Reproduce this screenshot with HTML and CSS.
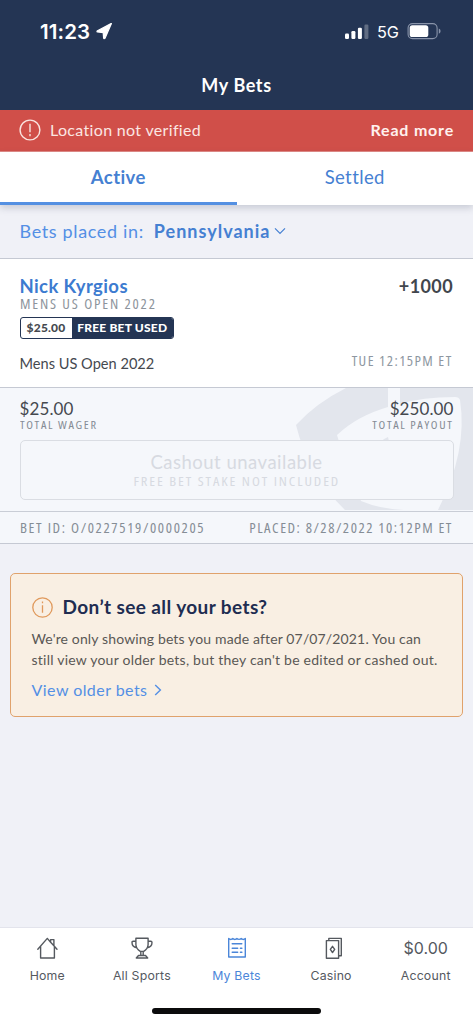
FILE: index.html
```
<!DOCTYPE html>
<html lang="en">
<head>
<meta charset="utf-8">
<title>My Bets</title>
<link rel="stylesheet" href="styles.css">
</head>
<body>
<div class="app">
  <header class="header">
    <div class="status">
      <div class="clock"><span class="time">11:23</span>
        <svg width="17" height="17" viewBox="0 0 17 17"><path d="M15.2 1 L8.9 15.4 Q8.1 16.2 7.6 15 L7.2 9.6 L1.5 9 Q.4 8.5 1.5 7.7 L14.6 .8 Q15.8 .2 15.2 1Z" fill="#fff" stroke="#fff" stroke-width="1.2" stroke-linejoin="round"/></svg>
      </div>
      <div class="signal">
        <svg width="24" height="16" viewBox="0 0 24 16"><g fill="#fff"><rect x="0" y="9.5" width="4" height="5.5" rx="1.2"/><rect x="6.4" y="7" width="4" height="8" rx="1.2"/><rect x="12.9" y="3.8" width="4" height="11.2" rx="1.2"/><rect x="19.4" y=".5" width="4" height="14.5" rx="1.2" opacity=".28"/></g></svg>
        <span class="network">5G</span>
        <svg width="34" height="17" viewBox="0 0 34 17"><rect x="1.1" y=".6" width="29" height="15" rx="4.4" fill="none" stroke="#8994aa" stroke-width="1.1"/><rect x="2.7" y="2.2" width="18.6" height="11.8" rx="2.6" fill="#fff"/><path d="M31.8 5.4 Q33.6 6.2 33.6 8.1 T31.8 10.8Z" fill="#8994aa"/></svg>
      </div>
    </div>
    <h1 class="title">My Bets</h1>
  </header>

  <div class="alert">
    <svg width="22" height="22" viewBox="0 0 22 22" fill="none" stroke="#fae3df" stroke-width="1.4"><circle cx="11" cy="11" r="9.9"/><path d="M11 4.8V13.3M11 15V17.2"/></svg>
    <span class="alert-text">Location not verified</span>
    <b class="alert-link">Read more</b>
  </div>

  <nav class="tabs">
    <div class="tab tab-active"><span>Active</span></div>
    <div class="tab"><span>Settled</span></div>
  </nav>

  <div class="filter">
    <span class="filter-label">Bets placed in:</span>
    <b class="filter-value">Pennsylvania</b>
    <svg width="12" height="8" viewBox="0 0 12 8" fill="none" stroke="#4580d2" stroke-width="1.2"><path d="M1 1.3L6 6.3L11 1.3"/></svg>
  </div>

  <section class="bet">
    <div class="pick">
      <div class="row"><b class="name">Nick Kyrgios</b><b class="odds">+1000</b></div>
      <div class="event"><span class="cond">MENS US OPEN 2022</span></div>
      <div class="badge"><span class="badge-amount">$25.00</span><span class="badge-label">FREE BET USED</span></div>
      <div class="row match"><span class="match-name">Mens US Open 2022</span><span class="cond cond-end match-time">TUE 12:15PM ET</span></div>
    </div>
    <div class="money">
      <svg class="watermark" width="180" height="122" viewBox="293 388 180 122"><path fill="#e3e6ed" fill-rule="evenodd" d="M346 388H388V407Q357 416 337 435Q348 473 361 501Q380 509 404 510H345Q308 474 296 425Q316 403 346 388ZM400 388H473V510H438Q468 451 460 400Q459 397 455 397Q422 397 400 404ZM376 446Q381 440 388 437L390 446Z"/></svg>
      <div class="row">
        <div class="amount"><span class="sum">$25.00</span><span class="cond small">TOTAL WAGER</span></div>
        <div class="amount right"><span class="sum">$250.00</span><span class="cond cond-end small">TOTAL PAYOUT</span></div>
      </div>
      <div class="cashout"><span class="cashout-title">Cashout unavailable</span><span class="cond cond-mid cashout-note">FREE BET STAKE NOT INCLUDED</span></div>
    </div>
    <div class="meta"><span class="cond bet-id">BET ID: O/0227519/0000205</span><span class="cond cond-end placed">PLACED: 8/28/2022 10:12PM ET</span></div>
  </section>

  <aside class="notice">
    <div class="notice-head">
      <svg width="21" height="21" viewBox="0 0 21 21" fill="none" stroke="#e0995c" stroke-width="1.3"><circle cx="10.5" cy="10.5" r="9.7"/><path d="M10.5 8.2V15.8M10.5 4.5V6.3"/></svg>
      <h2 class="notice-title">Don’t see all your bets?</h2>
    </div>
    <p class="notice-text"><span class="line1">We're only showing bets you made after 07/07/2021. You can</span><br><span class="line2">still view your older bets, but they can't be edited or cashed out.</span></p>
    <div class="notice-link"><span>View older bets</span><svg width="8" height="12" viewBox="0 0 8 12" fill="none" stroke="#548fe5" stroke-width="1.4"><path d="M1.2 1L6.4 6L1.2 11"/></svg></div>
  </aside>

  <footer class="nav">
    <div class="nav-items">
      <div class="item home"><svg width="22" height="22" viewBox="0 0 22 22"><path d="M1.8 12.2L11.3 1.4L14.6 5.2M21 12.2L17.9 8.8V2.6H14.6V5.2L17.9 8.8M4.6 9.6V21H18.4V9.6"/></svg><span>Home</span></div>
      <div class="item sports"><svg width="22" height="22" viewBox="0 0 22 22"><path d="M4.9 1.2H17.1V7.8Q16.8 12 12.7 14.4H9.3Q5.2 12 4.9 7.8ZM4.9 4.3H2.2Q1 4.3 1 5.5Q1 9.9 5.8 10.8M17.1 4.3H19.8Q21 4.3 21 5.5Q21 9.9 16.2 10.8M9.3 14.4H12.7M9.8 14.8V18.4M12.2 14.8V18.4M7.5 18.5H14.5L16.7 21H5.3Z"/></svg><span>All Sports</span></div>
      <div class="item bets on"><svg width="22" height="22" viewBox="0 0 22 22"><path d="M3.7 1.5Q5.7 3.3 7.8 1.5Q9.8 3.3 11.9 1.5Q14 3.3 16.2 1.5Q18.3 3.3 20.3 1.5V20H3.7ZM7.2 6.8H16.8M7.2 11.2H12.7M15.4 11.2H16.9M7.2 15.3H12.7M15.4 15.3H16.9"/></svg><span>My Bets</span></div>
      <div class="item casino"><svg width="24" height="22" viewBox="0 0 24 22"><path d="M7.4 3.6H19.6V21.2H7.4ZM9.8 3.6V1.4H22.3V18.8H19.6M13.5 9.3L15.7 12.4L13.5 15.5L11.3 12.4Z"/></svg><span>Casino</span></div>
      <div class="item account"><strong class="balance">$0.00</strong><span>Account</span></div>
    </div>
    <div class="home-bar"></div>
  </footer>
</div>
</body>
</html>
```
FILE: styles.css
```
* { box-sizing: border-box; }
body { margin: 0; font-family: "Lato", "Open Sans", sans-serif; color: #45494f; background: #f0f1f7; }
svg { display: block; flex: none; }
span, b { white-space: nowrap; }
.app { width: 473px; height: 1024px; display: flex; flex-direction: column; overflow: hidden; background: #f0f1f7; }
.row { display: flex; justify-content: space-between; }
.cond { display: inline-block; font-family: "Open Sans", "Noto Sans", sans-serif; font-stretch: 75%; transform: scaleX(1.09); transform-origin: left center; }
.cond-end { transform-origin: right center; }
.cond-mid { transform-origin: center; }

.header { height: 110px; background: #243554; color: #fff; }
.status { height: 63px; padding: 0 32px 0 40px; display: flex; justify-content: space-between; align-items: center; }
.clock { display: flex; align-items: center; gap: 6px; }
.time { font: 600 20.5px/24px "Inter", sans-serif; letter-spacing: .1px; }
.signal { display: flex; align-items: center; gap: 8px; }
.network { font: 400 16.3px/20px "Inter", sans-serif; }
.title { margin: 10px 0 0; text-align: center; font-size: 18px; line-height: 24px; font-weight: 700; letter-spacing: .6px; }

.alert { height: 42px; padding: 0 19px 1px 19px; display: flex; align-items: center; background: #d04f49; color: #fbe6e2; border-bottom: 1px solid #e08a86; }
.alert span, .alert b { padding-bottom: 2px; }
.alert-text { margin-left: 9px; font-size: 16px; letter-spacing: .33px; }
.alert-link { margin-left: auto; font-size: 16px; letter-spacing: .8px; color: #fff1ee; }

.tabs { height: 53px; display: flex; background: #fff; box-shadow: 0 3px 7px rgba(60, 70, 90, .22); position: relative; z-index: 1; }
.tab { flex: 1; height: 53px; padding-top: 13px; text-align: center; font-size: 18.5px; line-height: 24px; letter-spacing: .4px; color: #4580d2; }
.tab-active { font-weight: 700; border-bottom: 3px solid #5490e2; }

.filter { height: 54px; padding: 0 20px 1px 19.5px; display: flex; align-items: center; color: #4580d2; font-size: 18px; border-bottom: 1px solid #c5c9d3; }
.filter-label { color: #548fe5; letter-spacing: .65px; }
.filter-value { margin: 0 4px 0 10px; letter-spacing: 1px; }

.pick { height: 129px; padding: 15px 20px 0 19.5px; background: #fff; border-bottom: 1px solid #c5c9d3; }
.name { font-size: 18.5px; line-height: 24px; letter-spacing: .4px; color: #3c7bd0; }
.odds { font-size: 18px; line-height: 24px; letter-spacing: .4px; color: #41464d; }
.event { height: 14px; font-size: 13.5px; line-height: 13px; color: #8d949c; letter-spacing: 1.65px; }
.badge { width: 154.5px; height: 22px; margin-top: 5px; display: flex; border: 1px solid #243554; border-radius: 3px; overflow: hidden; font-size: 12px; font-weight: 900; line-height: 20px; }
.badge-amount { width: 51px; text-align: center; letter-spacing: .2px; }
.badge-label { flex: 1; text-align: center; letter-spacing: .2px; color: #fff; background: #243554; }
.match { margin-top: 14px; line-height: 21px; font-size: 14.6px; }
.match-time { font-size: 13.5px; line-height: 17px; color: #8e97a1; letter-spacing: 1.3px; }

.money { height: 124px; padding: 11px 19.5px 0; background: #f5f7fb; border-bottom: 1px solid #c9cdd6; position: relative; }
.watermark { position: absolute; right: 0; top: 0; }
.money .row, .cashout { position: relative; }
.amount { display: flex; flex-direction: column; align-items: flex-start; }
.right { align-items: flex-end; }
.sum { font-size: 17px; line-height: 19px; letter-spacing: .1px; }
.small { font-size: 11.3px; line-height: 13px; color: #858c95; letter-spacing: 1.5px; }
.cashout { height: 60px; margin-top: 9px; padding-top: 10px; display: flex; flex-direction: column; align-items: center; background: #f5f7fb; border: 1.6px solid #dadde3; border-radius: 5px; color: #d7dae1; }
.cashout-title { font-size: 18.5px; line-height: 22px; letter-spacing: .5px; }
.cashout-note { font-size: 13.3px; line-height: 16px; letter-spacing: 1.75px; }

.meta { height: 32px; padding: 0 20px 0 19.5px; display: flex; justify-content: space-between; align-items: center; background: #f5f7fb; border-bottom: 1px solid #c5c9d3; color: #858d96; font-size: 13.5px; }
.bet-id { letter-spacing: 1.5px; }
.placed { letter-spacing: 1.4px; }

.notice { height: 144px; margin: 29px 10px 0; padding: 22px 20px 0 20.5px; background: #f9efe3; border: 1.5px solid #e0a26c; border-radius: 5px; }
.notice-head { display: flex; align-items: center; gap: 10px; }
.notice-title { margin: -1px 0 1px; font-size: 19px; line-height: 23px; letter-spacing: .4px; color: #202c51; }
.notice-text { margin: 9px 0 0; font-size: 14px; line-height: 21px; color: #5a5855; }
.line1 { letter-spacing: .14px; }
.line2 { letter-spacing: .23px; }
.notice-link { display: flex; align-items: center; gap: 7px; margin-top: 9px; font-size: 16px; line-height: 22px; letter-spacing: .45px; color: #548fe5; }

.nav { height: 97px; margin-top: auto; background: #fff; border-top: 1px solid #e3e4ec; }
.nav-items { display: grid; grid-template-columns: repeat(5, 94.6px); height: 80px; padding-top: 9px; }
.item { display: flex; flex-direction: column; align-items: center; gap: 9px; color: #55595f; font: 12.3px/16px "Inter", sans-serif; letter-spacing: .2px; }
.item svg { fill: none; stroke: currentColor; stroke-width: 1.4; stroke-linejoin: round; stroke-linecap: round; }
.on { color: #4b86d9; }
.balance { height: 22px; font: 400 16px/22px "Inter", sans-serif; letter-spacing: 0; }
.home-bar { width: 169px; height: 6px; margin: 0 auto; border-radius: 3px; background: #0b0b0c; }
```
